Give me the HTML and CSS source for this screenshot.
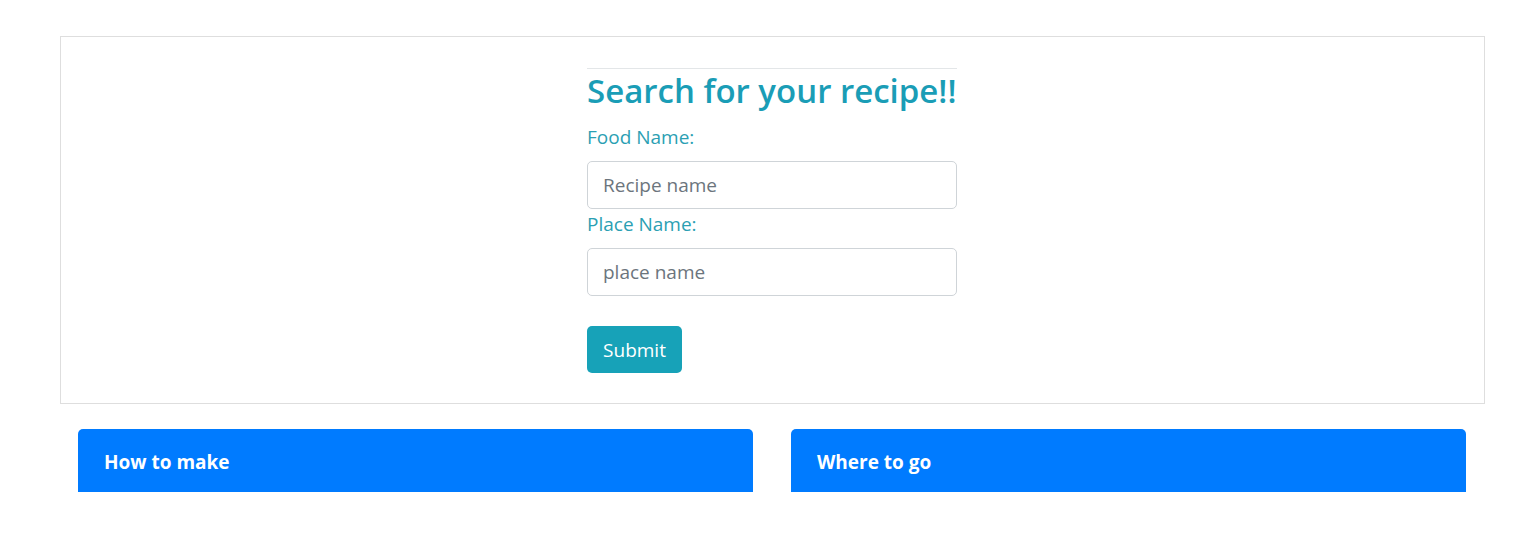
FILE: index.html
```html
<!DOCTYPE html>
<html lang="en">
<head>
<meta charset="utf-8">
<title>Recipe search</title>
<link rel="stylesheet" href="styles.css">
</head>
<body>
<div class="page">
  <section class="search-box">
    <form class="search-form">
      <hr class="rule">
      <h2 class="title">Search for your recipe!!</h2>
      <div class="field">
        <label class="label" for="food">Food Name:</label>
        <input class="input" id="food" type="text" placeholder="Recipe name">
      </div>
      <div class="field">
        <label class="label" for="place">Place Name:</label>
        <input class="input" id="place" type="text" placeholder="place name">
      </div>
      <button class="btn" type="button">Submit</button>
    </form>
  </section>
  <div class="cards">
    <div class="card"><div class="card-header">How to make</div></div>
    <div class="card"><div class="card-header">Where to go</div></div>
  </div>
</div>
</body>
</html>
```
FILE: styles.css
```css
* { box-sizing: border-box; }
html, body { margin: 0; padding: 0; background: #fff; }
body {
  font-family: "Open Sans", "Noto Sans", sans-serif;
  color: #212529;
}
.page {
  margin: 36px 55px 0 60px;
}
.search-box {
  border: 1px solid #dedede;
  padding: 31px 1px 30px 0;
  display: flex;
  justify-content: center;
}
.search-form {
  width: 370px;
  display: flex;
  flex-direction: column;
  align-items: flex-start;
}
.rule {
  width: 100%;
  margin: 0;
  border: 0;
  border-top: 1px solid #e3e6e8;
}
.title {
  margin: 0 0 10px;
  height: 43px;
  font-size: 33px;
  line-height: 43px;
  font-weight: 600;
  color: #1a9db6;
  letter-spacing: 0;
  white-space: nowrap;
}
.field {
  width: 100%;
  display: flex;
  flex-direction: column;
}
.label {
  font-size: 19px;
  line-height: 30px;
  color: #2b9fb3;
  margin-bottom: 9px;
}
.input {
  width: 100%;
  height: 48px;
  border: 1px solid #cfd4d8;
  border-radius: 5px;
  padding: 0 15px;
  font-family: inherit;
  font-size: 19px;
  color: #495057;
  background: #fff;
}
.input::placeholder { color: #6c757d; opacity: 1; }
.btn {
  margin-top: 30px;
  width: 95px;
  height: 47px;
  border: 0;
  border-radius: 5px;
  background: #17a2b8;
  color: #fff;
  font-family: inherit;
  font-size: 19px;
  padding: 0;
}
.cards {
  display: flex;
  gap: 38px;
  padding: 25px 19px 0 18px;
}
.card {
  flex: 1;
}
.card-header {
  height: 63px;
  background: #007bff;
  border-radius: 5px 5px 0 0;
  color: #fff;
  font-weight: 700;
  font-size: 19px;
  line-height: 63px;
  padding: 2px 26px 0;
}
```
